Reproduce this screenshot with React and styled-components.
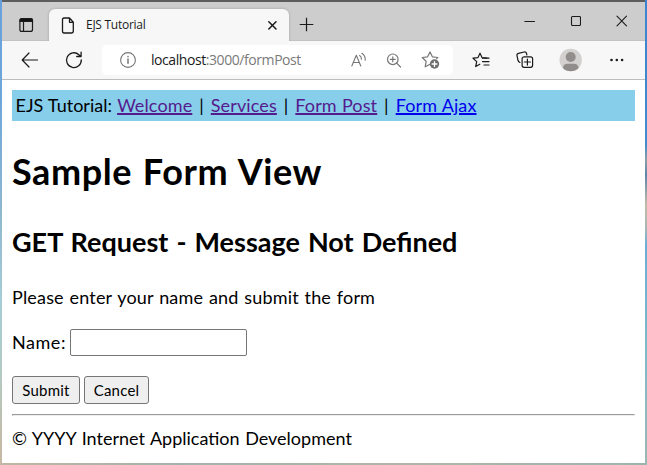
import React from "react";
import styled, { createGlobalStyle } from "styled-components";

const GlobalStyle = createGlobalStyle`
  * { box-sizing: border-box; }
  html, body { margin: 0; padding: 0; overflow: hidden; }
  svg { display: block; flex: none; }
`;

const Desktop = styled.div`
  width: 647px;
  height: 465px;
  padding: 0 2px 2px;
  background:
    linear-gradient(#68a0dc 0, #6fa6da 100px, #8fb9cf 220px, #a5cdd6 300px, #b4c9c0 380px, #c5b9a5 450px) left / 2px 100% no-repeat,
    linear-gradient(#3a85cf 0, #3f8ccd 145px, #8da0a6 160px, #5a86ac 175px, #c4bba5 205px, #a5b7b5 228px, #6aaed6 245px, #7fbac8 350px, #9cb8b4 465px) right / 2px 100% no-repeat,
    linear-gradient(90deg, #c0b5a2, #a3b2ab 180px, #b1b5a8 400px, #9cb4ae) bottom / 100% 2px no-repeat;
`;

const Window = styled.div`
  height: 463px;
  display: flex;
  flex-direction: column;
  border-top: 2px solid #5d5d5d;
  background: #fff;
`;

const TabStrip = styled.div`
  height: 39px;
  display: flex;
  background: #cdcdcd;
  border-bottom: 1px solid #c2c2c2;
`;

const TabMenu = styled.div`
  width: 47px;
  padding: 15px 0 0 17px;
`;

const Tab = styled.div`
  width: 240px;
  height: 32px;
  margin-top: 7px;
  padding: 0 11px 0 12px;
  display: flex;
  align-items: center;
  border-radius: 6px 6px 0 0;
  background: #f7f7f7;
  box-shadow: 0 0 3px rgba(0, 0, 0, 0.22);
  clip-path: inset(-4px -4px 0 -4px);
`;

const TabTitle = styled.span`
  flex: 1;
  margin-left: 12px;
  font: 12px/16px "Open Sans", sans-serif;
  letter-spacing: -0.27px;
  color: #1b1b1b;
`;

const NewTab = styled.div`
  padding: 15px 0 0 10px;
`;

const WindowControls = styled.div`
  display: flex;
  gap: 35px;
  margin-left: auto;
  padding: 13px 18px 0 0;
`;

const Toolbar = styled.div`
  height: 39px;
  display: flex;
  align-items: center;
  padding-left: 19px;
  background: #f7f7f7;
  border-bottom: 1px solid #bdbdbd;
`;

const Navigation = styled.div`
  width: 81px;
  display: flex;
  gap: 25px;
`;

const AddressBar = styled.div`
  width: 351px;
  height: 30px;
  display: flex;
  align-items: center;
  padding: 0 13px 0 18px;
  border-radius: 5px;
  background: #fff;
`;

const Url = styled.span`
  flex: 1;
  margin-left: 15px;
  font: 14px/20px "Open Sans", sans-serif;
  letter-spacing: -0.43px;
  color: #7a7a7a;
`;

const Host = styled.span`
  color: #1a1a1a;
`;

const AddressActions = styled.div`
  display: flex;
  align-items: center;
  gap: 19px;
`;

const BrowserActions = styled.div`
  display: flex;
  align-items: center;
  margin-left: 19px;
`;

const Action = styled.div`
  width: ${(p) => p.$width}px;
`;

const Page = styled.main`
  flex: 1;
  padding: 10px 10px 0;
  font: 18px/24px Lato, sans-serif;
  font-feature-settings: "liga" 1;
  word-spacing: 1px;
  color: #000;
`;

const SiteNav = styled.nav`
  height: 31px;
  padding-left: 3.5px;
  line-height: 31px;
  white-space: pre;
  letter-spacing: 0.12px;
  word-spacing: 0.4px;
  background: skyblue;
`;

const NavLabel = styled.span`
  letter-spacing: 0.03px;
`;

const NavLink = styled.a`
  color: ${(p) => (p.$visited ? "#551a8b" : "#0000ee")};
  text-decoration: underline;
  text-decoration-thickness: 2px;
  text-underline-offset: 1px;
`;

const Separator = styled.span`
  padding: 0 1.8px;
`;

const Title = styled.h1`
  margin: 26px 0 0;
  font-size: 36px;
  line-height: 48px;
  font-weight: 700;
  letter-spacing: 0.58px;
  word-spacing: 1.5px;
  white-space: nowrap;
`;

const Subtitle = styled.h2`
  margin: 29px 0 0;
  font-size: 27px;
  line-height: 36px;
  font-weight: 700;
  word-spacing: 1.5px;
  white-space: nowrap;
`;

const Instructions = styled.p`
  margin: 25px 0 0;
  letter-spacing: 0.17px;
`;

const Field = styled.label`
  display: flex;
  height: 27px;
  margin-top: 20px;
  line-height: 27px;
`;

const FieldName = styled.span`
  width: 58px;
  letter-spacing: 0.55px;
`;

const TextInput = styled.input`
  width: 177px;
  height: 27px;
  border: 1px solid #767676;
  border-radius: 2px;
  outline: 0;
  font: inherit;
`;

const Buttons = styled.div`
  display: flex;
  gap: 4px;
  margin-top: 20px;
`;

const Button = styled.button`
  width: ${(p) => p.$width}px;
  height: 28px;
  padding: 0;
  border: 1px solid #767676;
  border-radius: 3px;
  background: #efefef;
  color: #000;
  font: 15px/26px Lato, sans-serif;
  letter-spacing: 0.2px;
`;

const Rule = styled.hr`
  height: 2px;
  margin: 10px 0;
  border: 1px solid;
  border-color: #9a9a9a #eee #eee #9a9a9a;
`;

const Footer = styled.footer`
  white-space: nowrap;
`;

function Icon({ w = 16, h = 16, color = "#1b1b1b", stroke = 1.2, children }) {
  return (
    <svg width={w} height={h} viewBox={`0 0 ${w} ${h}`} fill="none" stroke={color} strokeWidth={stroke} strokeLinecap="round" strokeLinejoin="round">
      {children}
    </svg>
  );
}

const STAR = "M8 1.2 10 5.6 14.8 6.2M8 1.2 6 5.6 1 6.2 4.7 9.6 3.7 14.6 7.8 12.2";

export default function App() {
  return (
    <>
      <GlobalStyle />
      <Desktop>
        <Window>
          <TabStrip>
            <TabMenu>
              <Icon w={15} h={16}>
                <rect x="0.9" y="1.6" width="12.6" height="12.8" rx="2" />
                <path d="M1 3.2Q1 1.6 3 1.6H11.5Q13.5 1.6 13.5 3.2V4.5H1Z" fill="#111" />
                <path d="M4.5 5V14" />
              </Icon>
            </TabMenu>
            <Tab>
              <Icon w={13} h={17} stroke={1.3}>
                <path d="M3 1H8.5L12.3 5.2V14Q12.3 16 10.3 16H3Q1.5 16 1.5 14V3Q1.5 1 3 1ZM8.5 1V5.3H12.3" />
              </Icon>
              <TabTitle>EJS Tutorial</TabTitle>
              <Icon w={11} h={11} stroke={1.5}><path d="M1.8 1.8 9 9M9 1.8 1.8 9" /></Icon>
            </Tab>
            <NewTab>
              <Icon w={15} h={15} stroke={1.2}><path d="M7.5.7V14.3M.7 7.5H14.3" strokeLinecap="butt" /></Icon>
            </NewTab>
            <WindowControls>
              <Icon w={11} h={12} stroke={1}><path d="M.8 6.5H10.5" /></Icon>
              <Icon w={11} h={12} stroke={1.1}><rect x="1.5" y="1.5" width="9" height="9" rx="1" /></Icon>
              <Icon w={11} h={12} stroke={1.1}><path d="M1 1.2 10.5 10.8M10.5 1.2 1 10.8" /></Icon>
            </WindowControls>
          </TabStrip>
          <Toolbar>
            <Navigation>
              <Icon w={18} h={18}><path d="M8 2 1.2 9 8 16M1.2 9H16.5" /></Icon>
              <Icon w={19} h={18} stroke={1.3}><path d="M17.3 8.8A7.4 7.4 0 1 1 14.9 3.7L16.7 5.4M17.1 1.2V5.5H12.7" /></Icon>
            </Navigation>
            <AddressBar>
              <Icon w={16} h={18} color="#767676" stroke={1.1}>
                <circle cx="8" cy="9" r="7.4" /><path d="M8 8V12.3M8 5.5V5.8" strokeWidth="1.5" />
              </Icon>
              <Url><Host>localhost</Host>:3000/formPost</Url>
              <AddressActions>
                <Icon w={17} h={16} color="#767676" stroke={1.1}>
                  <path d="M1.8 14 6.3 3.2 10.8 14M3.3 10.5H9.3M9.6 3.5Q11.6 4.8 11.4 7.2M11.9 1.3Q15.6 4 15.2 8.2" />
                </Icon>
                <Icon w={16} h={17} color="#767676" stroke={1.2}>
                  <circle cx="6.8" cy="7.3" r="5.3" /><path d="M10.7 11.2 14.5 15M6.8 4.8V9.8M4.3 7.3H9.3" />
                </Icon>
                <Icon w={19} h={18} color="#767676" stroke={1.2}>
                  <path d="M15.7 7.5 16.8 6.5 11.4 5.8 9 1 6.6 5.8 1.2 6.5 5.1 10.3 4.2 15.8 8.5 13.5" />
                  <circle cx="13.5" cy="13" r="4.7" fill="#6e6e6e" stroke="none" />
                  <path d="M13.5 10.6V15.4M11.1 13H15.9" stroke="#fff" strokeWidth="1.3" />
                </Icon>
              </AddressActions>
            </AddressBar>
            <BrowserActions>
              <Action $width={44}>
                <Icon w={18} h={17}>
                  <path d={STAR} /><path d="M10.5 6.2H17M10.5 9.6H17M12 13H17" />
                </Icon>
              </Action>
              <Action $width={43}>
                <Icon w={18} h={18}>
                  <path d="M3.9 11.5Q2.3 10.8 1.9 9L1 4.7Q.6 2.8 2.5 2.3L8.1 1Q10 .7 10.5 2.3L10.9 4" />
                  <rect x="6.1" y="5.8" width="10.5" height="10.5" rx="2" /><path d="M11.4 8V14.1M8.3 11H14.4" />
                </Icon>
              </Action>
              <Action $width={50}>
                <svg width="23" height="24" viewBox="0 0 23 24">
                  <circle cx="11.7" cy="12" r="11.2" fill="#d3d1cf" />
                  <circle cx="11.7" cy="9" r="5" fill="#918d8a" />
                  <path d="M3.8 20Q4.7 15.8 8.2 15.8H15.2Q18.7 15.8 19.6 20A11.2 11.2 0 0 1 3.8 20Z" fill="#918d8a" />
                </svg>
              </Action>
              <svg width="15" height="4" viewBox="0 0 15 4" fill="#1b1b1b">
                <circle cx="2.5" cy="2" r="1.3" /><circle cx="7.8" cy="2" r="1.3" /><circle cx="13.1" cy="2" r="1.3" />
              </svg>
            </BrowserActions>
          </Toolbar>
          <Page>
            <SiteNav>
              <NavLabel>EJS Tutorial: </NavLabel><NavLink $visited>Welcome</NavLink><Separator> | </Separator><NavLink $visited>Services</NavLink><Separator> | </Separator><NavLink $visited>Form Post</NavLink><Separator> | </Separator><NavLink>Form Ajax</NavLink>
            </SiteNav>
            <Title>Sample Form View</Title>
            <Subtitle>GET Request - Message Not Defined</Subtitle>
            <Instructions>Please enter your name and submit the form</Instructions>
            <Field>
              <FieldName>Name:</FieldName>
              <TextInput type="text" />
            </Field>
            <Buttons>
              <Button $width={68}>Submit</Button>
              <Button $width={65}>Cancel</Button>
            </Buttons>
            <Rule />
            <Footer>© YYYY Internet Application Development</Footer>
          </Page>
        </Window>
      </Desktop>
    </>
  );
}
